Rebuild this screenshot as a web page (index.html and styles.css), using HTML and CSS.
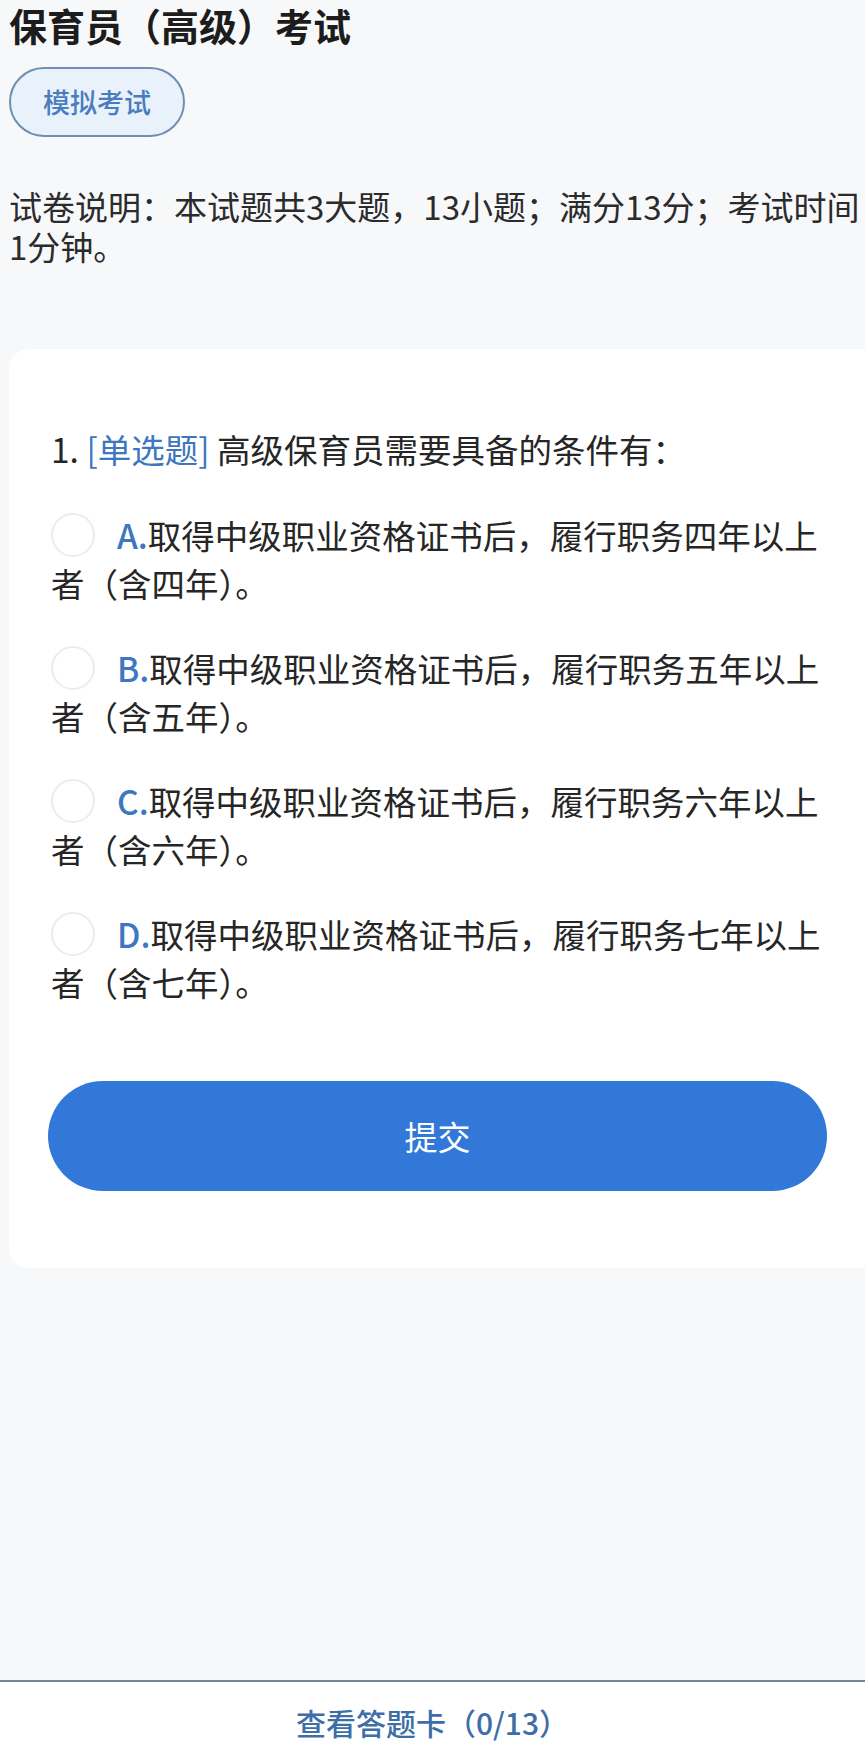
FILE: index.html
```html
<!DOCTYPE html>
<html lang="zh-CN">
<head>
<meta charset="UTF-8">
<meta name="viewport" content="width=device-width, initial-scale=1.0">
<title>保育员（高级）考试</title>
<link rel="stylesheet" href="styles.css">
</head>
<body>
<div class="page">
  <header class="top">
    <h1>保育员（高级）考试</h1>
    <span class="mode-tag">模拟考试</span>
    <p class="intro">试卷说明：本试题共3大题，13小题；满分13分；考试时间1分钟。</p>
  </header>

  <div class="card">
    <p class="question">1. <span class="qtype">[单选题]</span> 高级保育员需要具备的条件有：</p>
    <div class="options">
      <p class="option"><span class="radio"></span><span class="letter">A.</span>取得中级职业资格证书后，履行职务四年以上者（含四年）。</p>
      <p class="option"><span class="radio"></span><span class="letter">B.</span>取得中级职业资格证书后，履行职务五年以上者（含五年）。</p>
      <p class="option"><span class="radio"></span><span class="letter">C.</span>取得中级职业资格证书后，履行职务六年以上者（含六年）。</p>
      <p class="option"><span class="radio"></span><span class="letter">D.</span>取得中级职业资格证书后，履行职务七年以上者（含七年）。</p>
    </div>
    <button class="submit">提交</button>
  </div>
</div>

<footer class="bottom">
  <a href="#" class="card-link">查看答题卡（0/13）</a>
</footer>
</body>
</html>
```

FILE: styles.css
```css
body {
  margin: 0;
  height: 1761px;
  display: flex;
  flex-direction: column;
  background-color: #f7f8fa;
  color: #2e2e2e;
  font-family: "Noto Sans CJK SC", "Noto Sans", sans-serif;
}

.page {flex: 1;}

.top {padding-left: 9px;}

h1 {
  margin: 0;
  font-size: 38px;
  line-height: 50px;
  font-weight: 700;
  color: #1c1c1c;
}

.mode-tag {
  display: inline-block;
  margin-top: 17px;
  height: 66px;
  line-height: 66px;
  padding: 0 32px;
  border: 2px solid #6d8fb4;
  border-radius: 36px;
  background-color: #e9f1fb;
  color: #4a7cbf;
  font-size: 27px;
  font-weight: 500;
}

.intro {
  margin: 49px 0 0;
  font-size: 33px;
  line-height: 40px;
  color: #2b2b2b;
}

.card {
  margin: 83px 0 0 9px;
  padding: 76px 30px 77px 42px;
  background: #fff;
  border-radius: 20px 0 0 20px;
}

.question {
  margin: 0;
  font-size: 33.5px;
  line-height: 48px;
  color: #262626;
}

.qtype {color: #3d77c0;}

.options {
  margin-top: 38px;
  display: flex;
  flex-direction: column;
  gap: 37px;
}

.option {
  margin: 0;
  font-size: 33.5px;
  line-height: 48px;
  color: #262626;
}

.radio {
  display: inline-block;
  width: 40px;
  height: 40px;
  margin-right: 22px;
  border: 2px solid #ececec;
  border-radius: 50%;
  vertical-align: -8px;
}

.letter {color: #3d77c0; font-weight: 500;}

.submit {
  display: block;
  width: calc(100% - 5px);
  margin: 75px 0 0 -3px;
  height: 110px;
  border: none;
  border-radius: 55px;
  background-color: #3178d8;
  color: #fff;
  font-family: inherit;
  font-size: 33px;
  cursor: pointer;
}

.bottom {
  height: 79px;
  border-top: 2px solid #6f8797;
  background: #fff;
  display: flex;
  align-items: center;
  justify-content: center;
}

.card-link {
  color: #3d6ea6;
  text-decoration: none;
  font-size: 30px;
  font-weight: 500;
}
```
